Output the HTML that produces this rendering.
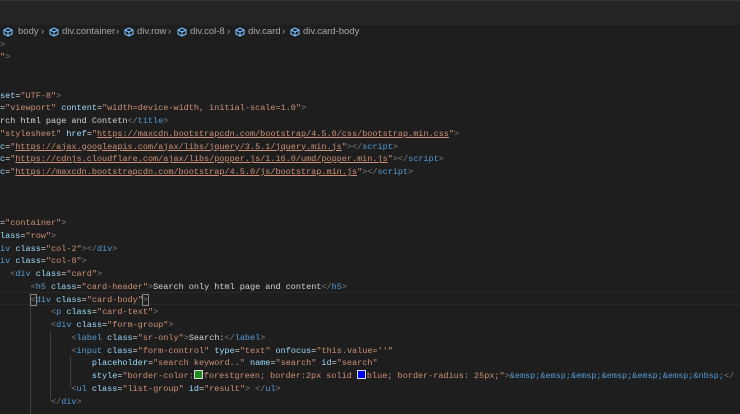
<!DOCTYPE html>
<html><head><meta charset="utf-8"><style>
body{margin:0;width:740px;height:414px;overflow:hidden;background:#1e1e1e;position:relative;font-family:"Liberation Mono",monospace}
.top{position:absolute;left:0;top:0;width:740px;height:24px;background:#252526;border-top:1px solid #333}
.bc{position:absolute;top:26px;left:0;height:12px;font:9.5px "Liberation Sans",sans-serif;color:#a9a9a9;white-space:nowrap}
.bc span{position:absolute;top:0}
.bc svg{position:absolute;top:1px}
.code{position:absolute;left:0;top:38.5px;font-size:8.5px;line-height:12.75px;color:#d4d4d4}
.l{height:12.75px;white-space:pre}
.t{color:#569cd6}.a{color:#9cdcfe}.s{color:#ce9178}.g{color:#808080}
.u{text-decoration:underline;text-decoration-color:#ce9178}
.hl{position:absolute;left:0;top:292px;width:740px;height:11px;border-top:1px solid #282828;border-bottom:1px solid #282828}
.ig{position:absolute;width:1px;background:#404040}
.sw{display:inline-block;width:7px;height:7px;border:1px solid #ddd;vertical-align:-1px;margin-right:1px}
.cur{outline:1px solid #888}
</style></head><body>
<div class="top"></div>
<div class="bc">
<svg style="left:3px" width="10" height="10" viewBox="0 0 10 10"><path d="M5 1L9 3V7L5 9L1 7V3Z M1 3L5 5L9 3 M5 5V9" fill="none" stroke="#75beff" stroke-width="1.1"/></svg><span style="left:18px">body</span><span style="left:41px">›</span>
<svg style="left:49px" width="10" height="10" viewBox="0 0 10 10"><path d="M5 1L9 3V7L5 9L1 7V3Z M1 3L5 5L9 3 M5 5V9" fill="none" stroke="#75beff" stroke-width="1.1"/></svg><span style="left:62px">div.container</span><span style="left:116px">›</span>
<svg style="left:124px" width="10" height="10" viewBox="0 0 10 10"><path d="M5 1L9 3V7L5 9L1 7V3Z M1 3L5 5L9 3 M5 5V9" fill="none" stroke="#75beff" stroke-width="1.1"/></svg><span style="left:137px">div.row</span><span style="left:168px">›</span>
<svg style="left:177px" width="10" height="10" viewBox="0 0 10 10"><path d="M5 1L9 3V7L5 9L1 7V3Z M1 3L5 5L9 3 M5 5V9" fill="none" stroke="#75beff" stroke-width="1.1"/></svg><span style="left:190px">div.col-8</span><span style="left:227px">›</span>
<svg style="left:235px" width="10" height="10" viewBox="0 0 10 10"><path d="M5 1L9 3V7L5 9L1 7V3Z M1 3L5 5L9 3 M5 5V9" fill="none" stroke="#75beff" stroke-width="1.1"/></svg><span style="left:248px">div.card</span><span style="left:282px">›</span>
<svg style="left:290px" width="10" height="10" viewBox="0 0 10 10"><path d="M5 1L9 3V7L5 9L1 7V3Z M1 3L5 5L9 3 M5 5V9" fill="none" stroke="#75beff" stroke-width="1.1"/></svg><span style="left:303px">div.card-body</span>
</div>
<div class="hl"></div>
<div class="ig" style="left:30px;top:305px;height:109px"></div>
<div class="ig" style="left:50px;top:331px;height:70px"></div>
<div class="ig" style="left:70px;top:356px;height:32px"></div>
<div class="code"><div class="l"><span class="g">&gt;</span></div><div class="l"><span class="s">"</span><span class="g">&gt;</span></div><div class="l"></div><div class="l"></div><div class="l"><span class="a">set</span>=<span class="s">"UTF-8"</span><span class="g">&gt;</span></div><div class="l">=<span class="s">"viewport"</span> <span class="a">content</span>=<span class="s">"width=device-width, initial-scale=1.0"</span><span class="g">&gt;</span></div><div class="l">rch html page and Contetn<span class="g">&lt;/</span><span class="t">title</span><span class="g">&gt;</span></div><div class="l"><span class="s">"stylesheet"</span> <span class="a">href</span>=<span class="s">"<span class="u">https://maxcdn.bootstrapcdn.com/bootstrap/4.5.0/css/bootstrap.min.css</span>"</span><span class="g">&gt;</span></div><div class="l"><span class="a">c</span>=<span class="s">"<span class="u">https://ajax.googleapis.com/ajax/libs/jquery/3.5.1/jquery.min.js</span>"</span><span class="g">&gt;&lt;/</span><span class="t">script</span><span class="g">&gt;</span></div><div class="l"><span class="a">c</span>=<span class="s">"<span class="u">https://cdnjs.cloudflare.com/ajax/libs/popper.js/1.16.0/umd/popper.min.js</span>"</span><span class="g">&gt;&lt;/</span><span class="t">script</span><span class="g">&gt;</span></div><div class="l"><span class="a">c</span>=<span class="s">"<span class="u">https://maxcdn.bootstrapcdn.com/bootstrap/4.5.0/js/bootstrap.min.js</span>"</span><span class="g">&gt;&lt;/</span><span class="t">script</span><span class="g">&gt;</span></div><div class="l"></div><div class="l"></div><div class="l"></div><div class="l">=<span class="s">"container"</span><span class="g">&gt;</span></div><div class="l"><span class="a">lass</span>=<span class="s">"row"</span><span class="g">&gt;</span></div><div class="l"><span class="t">iv</span> <span class="a">class</span>=<span class="s">"col-2"</span><span class="g">&gt;&lt;/</span><span class="t">div</span><span class="g">&gt;</span></div><div class="l"><span class="t">iv</span> <span class="a">class</span>=<span class="s">"col-8"</span><span class="g">&gt;</span></div><div class="l">  <span class="g">&lt;</span><span class="t">div</span> <span class="a">class</span>=<span class="s">"card"</span><span class="g">&gt;</span></div><div class="l">      <span class="g">&lt;</span><span class="t">h5</span> <span class="a">class</span>=<span class="s">"card-header"</span><span class="g">&gt;</span>Search only html page and content<span class="g">&lt;/</span><span class="t">h5</span><span class="g">&gt;</span></div><div class="l">      <span class="g cur">&lt;</span><span class="t">div</span> <span class="a">class</span>=<span class="s">"card-body"</span><span class="g cur">&gt;</span></div><div class="l">          <span class="g">&lt;</span><span class="t">p</span> <span class="a">class</span>=<span class="s">"card-text"</span><span class="g">&gt;</span></div><div class="l">          <span class="g">&lt;</span><span class="t">div</span> <span class="a">class</span>=<span class="s">"form-group"</span><span class="g">&gt;</span></div><div class="l">              <span class="g">&lt;</span><span class="t">label</span> <span class="a">class</span>=<span class="s">"sr-only"</span><span class="g">&gt;</span>Search:<span class="g">&lt;/</span><span class="t">label</span><span class="g">&gt;</span></div><div class="l">              <span class="g">&lt;</span><span class="t">input</span> <span class="a">class</span>=<span class="s">"form-control"</span> <span class="a">type</span>=<span class="s">"text"</span> <span class="a">onfocus</span>=<span class="s">"this.value=''"</span></div><div class="l">                  <span class="a">placeholder</span>=<span class="s">"search keyword.."</span> <span class="a">name</span>=<span class="s">"search"</span> <span class="a">id</span>=<span class="s">"search"</span></div><div class="l">                  <span class="a">style</span>=<span class="s">"border-color:<span class="sw" style="background:#228b22"></span>forestgreen; border:2px solid <span class="sw" style="background:#0000ff"></span>blue; border-radius: 25px;"</span><span class="g">&gt;</span><span class="t">&amp;emsp;&amp;emsp;&amp;emsp;&amp;emsp;&amp;emsp;&amp;emsp;&amp;nbsp;</span><span class="g">&lt;/</span></div><div class="l">              <span class="g">&lt;</span><span class="t">ul</span> <span class="a">class</span>=<span class="s">"list-group"</span> <span class="a">id</span>=<span class="s">"result"</span><span class="g">&gt;</span> <span class="g">&lt;/</span><span class="t">ul</span><span class="g">&gt;</span></div><div class="l">          <span class="g">&lt;/</span><span class="t">div</span><span class="g">&gt;</span></div></div>
</body></html>
